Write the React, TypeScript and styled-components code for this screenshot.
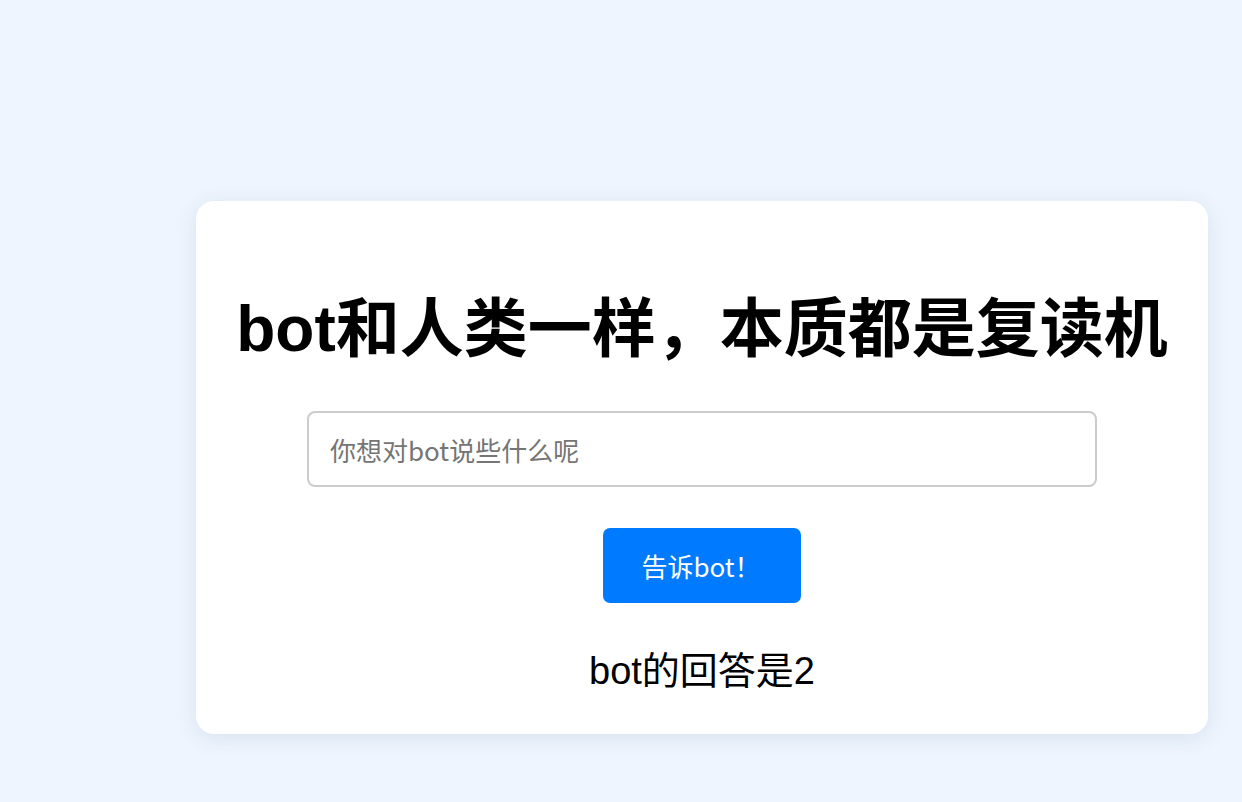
import React, { useState } from 'react'
import styled, { createGlobalStyle } from 'styled-components'

const GlobalStyle = createGlobalStyle`
  html, body {
    margin: 0;
    padding: 0;
    background-color: #eef5fe;
  }
  body {
    font-family: "Liberation Sans", "Noto Sans CJK SC", sans-serif;
  }
`

const Page = styled.div`
  min-height: 802px;
  box-sizing: border-box;
  padding: 201px 0 0 196px;
`

const Card = styled.div`
  width: 1012px;
  box-sizing: border-box;
  background-color: #ffffff;
  border-radius: 18px;
  box-shadow: 0 4px 22px rgba(30, 60, 110, 0.1);
  padding: 88px 0 42px;
  display: flex;
  flex-direction: column;
  align-items: center;
`

const Title = styled.h1`
  margin: 0;
  font-family: "Liberation Sans", "Noto Sans CJK SC", sans-serif;
  font-size: 64px;
  line-height: 80px;
  font-weight: 700;
  color: #000000;
`

const Input = styled.input`
  margin-top: 42px;
  width: 790px;
  height: 76px;
  box-sizing: border-box;
  border: 2px solid #cccccc;
  border-radius: 8px;
  padding: 0 21px;
  font-family: "Noto Sans CJK SC", sans-serif;
  font-size: 26px;
  color: #333333;
  outline: none;
  &::placeholder {
    color: #757575;
  }
`

const Button = styled.button`
  margin-top: 41px;
  width: 198px;
  height: 75px;
  border: none;
  border-radius: 7px;
  background-color: #007bff;
  color: #ffffff;
  font-family: "Noto Sans CJK SC", sans-serif;
  font-size: 26px;
  cursor: pointer;
  padding: 0 2px 0 0;
  &:hover {
    background-color: #0069d9;
  }
`

const Answer = styled.p`
  margin: 47px 0 0;
  font-family: "Liberation Sans", "Noto Sans CJK SC", sans-serif;
  font-size: 38px;
  line-height: 42px;
  color: #000000;
`

export default function App() {
  const [text, setText] = useState('')
  const [answer, setAnswer] = useState('2')

  return (
    <>
      <GlobalStyle />
      <Page>
        <Card>
          <Title>bot和人类一样，本质都是复读机</Title>
          <Input
            value={text}
            onChange={(e) => setText(e.target.value)}
            placeholder="你想对bot说些什么呢"
          />
          <Button onClick={() => setAnswer(text)}>告诉bot！</Button>
          <Answer>bot的回答是{answer}</Answer>
        </Card>
      </Page>
    </>
  )
}
